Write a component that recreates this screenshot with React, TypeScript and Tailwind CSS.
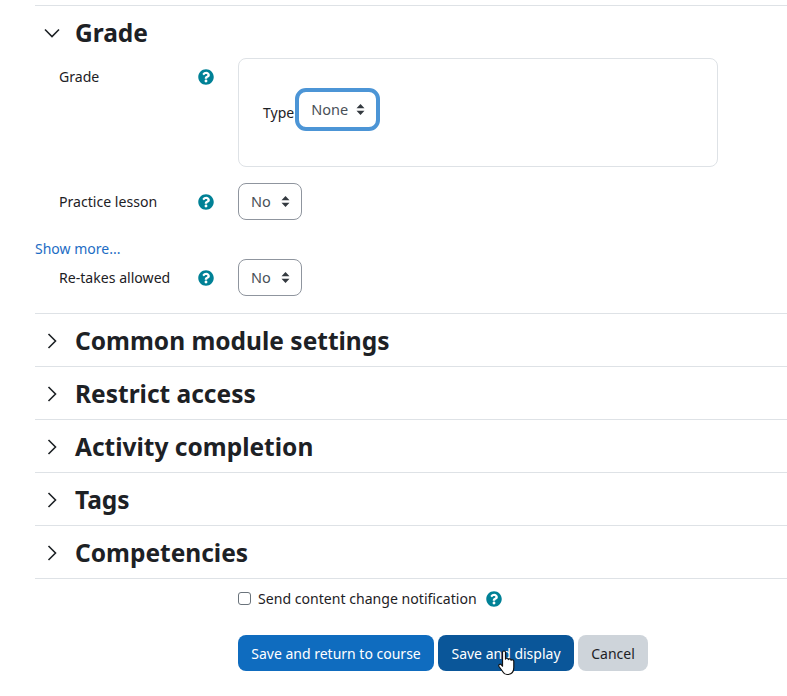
import React from "react";
import { FaQuestionCircle } from "react-icons/fa";

const font = { fontFamily: '"Noto Sans", "Open Sans", sans-serif' };

const Chevron = ({ open }: { open?: boolean }) => (
  <svg width="16" height="16" viewBox="0 0 16 16" fill="none" stroke="#1d2125" strokeWidth="1.6" className="shrink-0">
    {open ? <path d="M1 4.500 8 11.500l7-7" /> : <path d="M4.500 1 11.500 8l-7 7" />}
  </svg>
);

const Help = () => <FaQuestionCircle className="text-[#008196] text-base" />;

const Arrows = () => (
  <svg width="9" height="11" viewBox="0 0 9 11" fill="#343a40">
    <path d="M4.500 0 8.500 4.300H.5zM4.500 11 .5 6.700h8z" />
  </svg>
);

const SelectBox = ({ label }: { label: string }) => (
  <div className="flex h-[37px] w-[64px] items-center gap-[10px] rounded-lg border border-[#8f959e] bg-white pl-[12px] text-[#495057]">
    <span className="text-[14.5px]">{label}</span>
    <Arrows />
  </div>
);

const FieldRow = ({ label, value }: { label: string; value: string }) => (
  <div className="flex h-[37px] items-center">
    <span className="w-[139px] shrink-0 pl-[24px] text-[14.1px] text-[#1d2125]">{label}</span>
    <span className="flex w-[64px] justify-center">
      <Help />
    </span>
    <SelectBox label={value} />
  </div>
);

const SectionHead = ({ title, open }: { title: string; open?: boolean }) => (
  <div className="flex h-[53px] items-center border-t border-[#dee2e6] pt-[1px]">
    <span className="flex w-[40px] justify-center pr-[6px]">
      <Chevron open={open} />
    </span>
    <h3 className="mt-[2px] text-[24.5px] font-bold text-[#1d2125]">{title}</h3>
  </div>
);

export default function App() {
  return (
    <div className="relative h-[696px] overflow-hidden bg-white pl-[35px] pt-[5px]" style={font}>
      <SectionHead title="Grade" open />

      <div className="flex">
        <div className="flex h-[36px] w-[203px] shrink-0 items-center">
          <span className="w-[139px] shrink-0 pl-[24px] pt-[2px] text-[14.1px] text-[#1d2125]">Grade</span>
          <span className="flex w-[64px] justify-center pt-[2px]">
            <Help />
          </span>
        </div>
        <div className="flex h-[109px] w-[480px] items-center rounded-lg border border-[#dee2e6] pl-[24px]">
          <span className="-mt-[1px] text-[14px] text-[#1d2125]">Type</span>
          <div className="ml-[1px] -mt-[6px] flex h-[43px] w-[85px] shrink-0 items-center gap-[8px] rounded-[11px] border-[4px] border-[#4c95d6] bg-white pl-[12px] text-[#495057]">
            <span className="text-[14.5px]">None</span>
            <Arrows />
          </div>
        </div>
      </div>

      <div className="mt-[16px]">
        <FieldRow label="Practice lesson" value="No" />
      </div>

      <a className="mt-[19px] block text-[14px] leading-[20px] text-[#1d6cc4]">Show more...</a>

      <FieldRow label="Re-takes allowed" value="No" />

      <div className="mt-[17px]">
        <SectionHead title="Common module settings" />
        <SectionHead title="Restrict access" />
        <SectionHead title="Activity completion" />
        <SectionHead title="Tags" />
        <SectionHead title="Competencies" />
      </div>

      <div className="border-t border-[#dee2e6] pl-[203px] pt-[9px]">
        <div className="flex items-center">
          <span className="h-[13px] w-[13px] rounded-[3px] border border-[#6a737b] bg-white" />
          <span className="ml-[7px] text-[14.1px] text-[#1d2125]">Send content change notification</span>
          <span className="ml-[9px] flex">
            <Help />
          </span>
        </div>

        <div className="mt-[26px] flex gap-[4px] text-[14px]">
          <button className="h-[36px] w-[196px] rounded-lg bg-[#0f6cbf] text-white">Save and return to course</button>
          <button className="h-[36px] w-[136px] rounded-lg bg-[#0a5699] text-white">Save and display</button>
          <button className="h-[36px] w-[70px] rounded-lg bg-[#ced4da] text-[#1d2125]">Cancel</button>
        </div>
      </div>

      <div className="mt-[21px] flex items-center gap-[13px]">
        <span className="h-[14px] w-[14px] rounded-full bg-[#ca3120]" />
        <span className="text-[14px] text-[#1d2125]">Required</span>
      </div>

      {/* mouse pointer caught in the screenshot */}
      <svg className="absolute left-[497px] top-[650px]" width="20" height="26" viewBox="0 0 20 26">
        <path
          d="M5.500 2.200c0-1.600 3-1.600 3 0v7c.4-1.400 2.800-1.200 2.800.4.5-1.300 2.800-1 2.800.7.6-1 2.700-.6 2.700 1v6.200c0 3.500-2 6.500-5.500 7H10c-2 0-3.200-1-4-2.500L2 16.500c-1-1.700 1.200-3 2.400-1.700l1.100 1.400z"
          fill="#fff"
          stroke="#111"
          strokeWidth="1.2"
          strokeLinejoin="round"
        />
      </svg>
    </div>
  );
}
